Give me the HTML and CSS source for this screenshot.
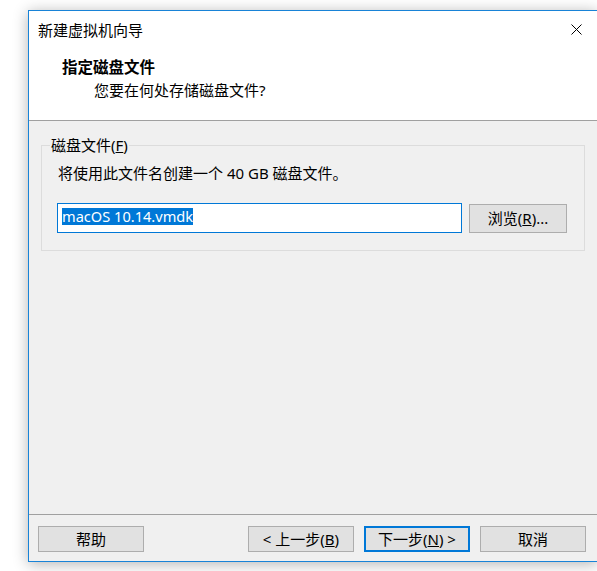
FILE: index.html
```html
<!DOCTYPE html>
<html lang="zh-CN">
<head>
  <meta charset="UTF-8">
  <meta name="viewport" content="width=device-width, initial-scale=1.0">
  <title>新建虚拟机向导</title>
  <link rel="stylesheet" href="styles.css">
</head>
<body>
  <div class="desktop">
    <div class="dialog">
      <div class="titlebar">
        <span class="title">新建虚拟机向导</span>
        <span class="close">
          <svg width="11" height="11" viewBox="0 0 11 11">
            <path d="M0.5 0.5 L10.5 10.5 M10.5 0.5 L0.5 10.5" stroke="#000" stroke-width="1" fill="none"/>
          </svg>
        </span>
      </div>

      <div class="header">
        <h1>指定磁盘文件</h1>
        <p>您要在何处存储磁盘文件?</p>
      </div>

      <div class="content">
        <fieldset class="group">
          <legend>磁盘文件(<u>F</u>)</legend>
          <p class="hint">将使用此文件名创建一个 40 GB 磁盘文件。</p>
          <div class="file-row">
            <div class="file-input"><span class="selected">macOS 10.14.vmdk</span></div>
            <button class="btn browse">浏览(<u>R</u>)...</button>
          </div>
        </fieldset>
      </div>

      <div class="footer">
        <button class="btn">帮助</button>
        <div class="nav">
          <button class="btn">&lt; 上一步(<u>B</u>)</button>
          <button class="btn default">下一步(<u>N</u>) &gt;</button>
          <button class="btn">取消</button>
        </div>
      </div>
    </div>
  </div>
</body>
</html>
```

FILE: styles.css
```css
* {
  margin: 0;
  padding: 0;
  box-sizing: border-box;
}

body {
  background-color: #fff;
  overflow: hidden;
  font-family: "Noto Sans", "Noto Sans CJK SC", sans-serif;
  font-size: 15px;
  color: #000;
}

/* the dialog runs off the right edge of the screen */
.desktop {
  height: 100vh;
  overflow: hidden;
  padding: 10px 0 0 28px;
}

.dialog {
  width: 570px;
  height: 552px;
  border: 1px solid #1883d7;
  background-color: #f0f0f0;
  box-shadow: 0 2px 14px rgba(0, 0, 0, 0.3);
  display: flex;
  flex-direction: column;
}

/* title bar + wizard header share the white area */
.titlebar {
  height: 38px;
  background-color: #fff;
  display: flex;
  align-items: center;
  justify-content: space-between;
  padding: 0 15px 0 9px;
}

.title {
  line-height: 20px;
}

.close {
  display: flex;
  margin-top: -2px;
}

.header {
  background-color: #fff;
  padding: 8px 0 20px 33px;
  border-bottom: 1px solid #a0a0a0;
}

.header h1 {
  font-size: 15.5px;
  font-weight: bold;
  line-height: 20px;
}

.header p {
  margin-top: 3px;
  padding-left: 32px;
  line-height: 20px;
}

.content {
  flex: 1;
  padding: 14px 12px 0 12px;
}

.group {
  border: 1px solid #dcdcdc;
  padding: 8px 16px 17px 15px;
}

.group legend {
  margin-left: -7px;
  padding: 0 1px;
  line-height: 20px;
}

.hint {
  line-height: 20px;
  padding-left: 1px;
}

.file-row {
  display: flex;
  align-items: center;
  justify-content: space-between;
  margin-top: 20px;
}

.file-input {
  width: 405px;
  height: 30px;
  border: 1px solid #0078d7;
  background-color: #fff;
  padding: 2px 0 0 4px;
}

.selected {
  display: inline-block;
  background-color: #0078d7;
  color: #fff;
  font-size: 14.6px;
  line-height: 17px;
  height: 17px;
}

.btn {
  font-family: inherit;
  font-size: 15px;
  color: #000;
  background-color: #e1e1e1;
  border: 1px solid #adadad;
  width: 106px;
  height: 26px;
  line-height: 20px;
}

.browse {
  width: 98px;
  height: 29px;
  margin-right: 1px;
}

.btn.default {
  border: 2px solid #0078d7;
}

.footer {
  height: 47px;
  border-top: 1px solid #a0a0a0;
  display: flex;
  justify-content: space-between;
  align-items: flex-start;
  padding: 11px 11px 0 9px;
}

.nav {
  display: flex;
  gap: 10px;
}
```
